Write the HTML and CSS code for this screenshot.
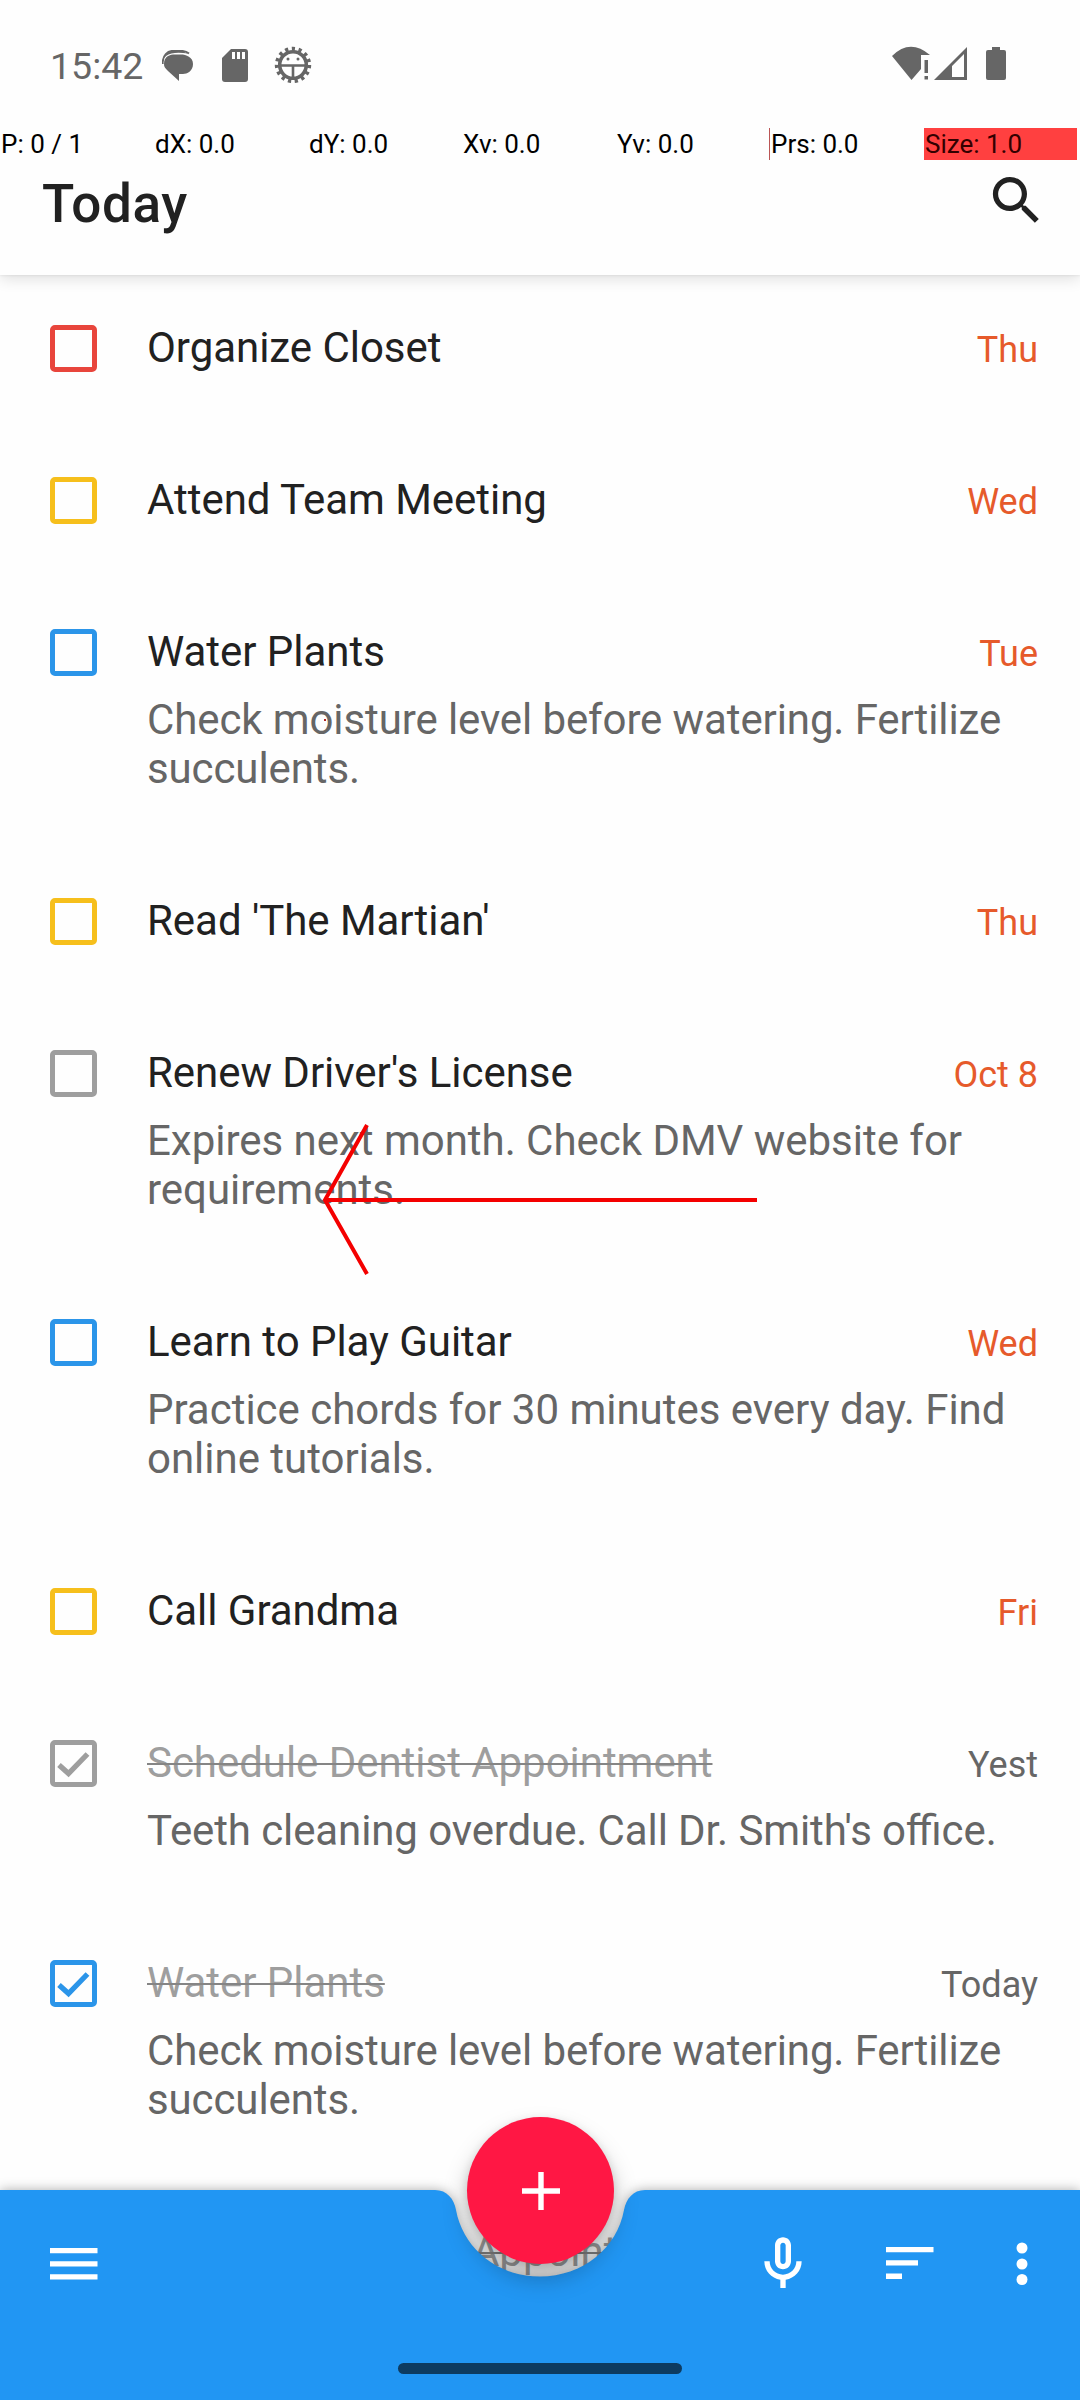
FILE: index.html
```html
<!DOCTYPE html>
<html lang="en">
<head>
<meta charset="utf-8">
<title>Tasks</title>
<link rel="stylesheet" href="styles.css">
</head>
<body>
<div class="screen">
  <header class="header">
    <div class="status">
      <span class="clock">15:42</span>
      <svg class="icon-chat" width="32" height="32" viewBox="0 0 32 32"><path d="M2 14C2 6 8 4.500 13 4.500H19C24 4.500 31 7 31 14S25 24 21 24H17V31L6 21C3 18 2 17 2 14Z" fill="#666"/><path d="M.8 14C0 5 6 .8 11 .8H19C22 .8 25 1.800 27 3.500" fill="none" stroke="#666" stroke-width="1.800"/><path d="M1 9C4 3 8 1 12 1H20L26 3.500C18 2.500 9 2 4 6Z" fill="#666"/></svg>
      <svg class="icon-card" width="26" height="33" viewBox="0 0 26 33"><path d="M9 0H23Q26 0 26 3V30Q26 33 23 33H3Q0 33 0 30V9Z" fill="#666"/><path d="M10 3h3v7h-3zM15 3h3v7h-3zM20 3h3v7h-3z" fill="#fff"/></svg>
      <svg class="icon-bug" width="38" height="38" viewBox="-19 -19 38 38"><circle r="16.200" fill="none" stroke="#666" stroke-width="4" stroke-dasharray="3.200 3.586"/><circle r="13.300" fill="none" stroke="#666" stroke-width="3.600"/><path d="M-13 0.500H13M0 0V13" stroke="#666" stroke-width="2.600"/><circle cx="-5" cy="-6" r="1.500" fill="#666"/><circle cx="5" cy="-6" r="1.500" fill="#666"/></svg>
      <span class="grow"></span>
      <svg class="icon-net" width="116" height="36" viewBox="0 0 116 36"><path d="M0 10Q18 -8 38 9H29V23L19.500 34Z" fill="#666"/><path d="M32.500 14h3.500v13h-3.500zM32.500 30h3.500v3.500h-3.500z" fill="#666"/><path d="M42 34 75 1V34ZM60 20V31H72V8Z" fill="#666" fill-rule="evenodd"/><path d="M94 6Q94 4 96 4H100V1H108V4H112Q114 4 114 6V32Q114 34 112 34H96Q94 34 94 32Z" fill="#666"/></svg>
    </div>
    <div class="pointer">
      <span>P: 0 / 1</span><span>dX: 0.0</span><span>dY: 0.0</span><span>Xv: 0.0</span><span>Yv: 0.0</span><span class="prs">Prs: 0.0</span><span class="size">Size: 1.0</span>
    </div>
    <div class="title-row">
      <h1>Today</h1>
      <svg width="63" height="63" viewBox="0 0 24 24"><path fill="#212121" d="M15.500 14h-.79l-.28-.27C15.410 12.590 16 11.110 16 9.500 16 5.910 13.090 3 9.500 3S3 5.910 3 9.500 5.910 16 9.500 16c1.610 0 3.090-.59 4.230-1.570l.27.28v.79l5 4.990L20.490 19l-4.990-5zm-6 0C7.010 14 5 11.990 5 9.500S7.010 5 9.500 5 14 7.010 14 9.500 11.990 14 9.500 14z"/></svg>
    </div>
  </header>
  <main class="list">
    <article class="task"><i class="box red"></i><div class="body"><h2>Organize Closet</h2></div><time>Thu</time></article>
    <article class="task"><i class="box yellow"></i><div class="body"><h2>Attend Team Meeting</h2></div><time>Wed</time></article>
    <article class="task"><i class="box blue"></i><div class="body"><h2>Water Plants</h2><p class="tight">Check moisture level before watering. Fertilize<br>succulents.</p></div><time>Tue</time></article>
    <article class="task"><i class="box yellow"></i><div class="body"><h2>Read 'The Martian'</h2></div><time>Thu</time></article>
    <article class="task"><i class="box grey"></i><div class="body"><h2>Renew Driver's License</h2><p>Expires next month. Check DMV website for<br>requirements.</p></div><time>Oct 8</time></article>
    <article class="task"><i class="box blue"></i><div class="body"><h2>Learn to Play Guitar</h2><p>Practice chords for 30 minutes every day. Find<br>online tutorials.</p></div><time>Wed</time></article>
    <article class="task"><i class="box yellow"></i><div class="body"><h2>Call Grandma</h2></div><time>Fri</time></article>
    <article class="task done"><i class="box grey"><svg width="47" height="47" viewBox="0 0 47 47"><path d="M9 25 18.500 33.500 37.500 14" /></svg></i><div class="body"><h2>Schedule Dentist Appointment</h2><p class="tight">Teeth cleaning overdue. Call Dr. Smith's office.</p></div><time>Yest</time></article>
    <article class="task done"><i class="box blue"><svg width="47" height="47" viewBox="0 0 47 47"><path d="M9 25 18.500 33.500 37.500 14" /></svg></i><div class="body"><h2>Water Plants</h2><p class="tight">Check moisture level before watering. Fertilize<br>succulents.</p></div><time>Today</time></article>
    <article class="task done partial"><div class="body"><h2>Appointment</h2></div></article>
  </main>
  <footer class="bar">
    <svg class="bar-shape" width="1080" height="230" viewBox="0 -20 1080 230"><path d="M0 0H435C447 0 454 9 456 20C463 58 497 86.500 540 86.500S617 58 624 20C626 9 633 0 645 0H1080V210H0Z" fill="#2196f3"/></svg>
    <div class="actions">
      <svg width="48" height="34" viewBox="0 0 48 34"><path d="M0 1h47.500v5.300H0zM0 14.200h47.500v5.300H0zM0 27.300h47.500v5.300H0z" fill="#fff"/></svg>
      <span class="grow"></span>
      <svg width="64" height="64" viewBox="0 0 24 24"><path fill="#fff" d="M12 14c1.660 0 3-1.340 3-3V5c0-1.660-1.340-3-3-3S9 3.340 9 5v6c0 1.660 1.340 3 3 3zm-1-9c0-.55.450-1 1-1s1 .450 1 1v6c0 .55-.450 1-1 1s-1-.450-1-1V5zm6 6c0 2.760-2.240 5-5 5s-5-2.240-5-5H5c0 3.530 2.610 6.430 6 6.920V21h2v-3.080c3.390-.490 6-3.390 6-6.920h-2z"/></svg>
      <svg class="icon-sort" width="48" height="34" viewBox="0 0 48 34"><path d="M0 0h47.500v5.300H0zM0 13.300h32v5.300H0zM0 26.600h16v5.300H0z" fill="#fff"/></svg>
      <svg class="icon-more" width="12" height="44" viewBox="0 0 12 44"><circle cx="6" cy="6" r="5.500"/><circle cx="6" cy="22" r="5.500"/><circle cx="6" cy="37.500" r="5.500"/></svg>
    </div>
    <div class="home"></div>
    <div class="fab"><svg width="38" height="38" viewBox="0 0 38 38"><path d="M0 19H38M19 0V38" stroke="#fff" stroke-width="5.400"/></svg></div>
  </footer>
  <svg class="gesture" width="440" height="156" viewBox="0 0 440 156"><path d="M47 1 5 76 47 150M5 76H437" fill="none" stroke="#f40000" stroke-width="4"/></svg>
  <i class="touch"></i>
</div>
</body>
</html>
```
FILE: styles.css
```css
* { box-sizing: border-box; margin: 0; padding: 0; }
body { background: #fefefe; font-family: Roboto, sans-serif; color: #212121; }
.screen { position: relative; width: 1080px; height: 2400px; overflow: hidden; display: flex; flex-direction: column; }
.grow { flex: 1; }
svg { display: block; flex: none; }
.header { height: 275px; flex: none; background: #fefefe; box-shadow: 0 4px 14px rgba(0,0,0,.12), 0 0 3px rgba(0,0,0,.1); display: flex; flex-direction: column; }
.status { height: 128px; display: flex; align-items: flex-start; padding-left: 50px; }
.clock { width: 112px; font-size: 37.5px; line-height: 44px; margin-top: 44px; color: #666; }
.icon-chat { margin-top: 50px; }
.icon-card { margin: 49px 0 0 28px; }
.icon-bug { margin: 46px 0 0 26px; }
.icon-net { margin: 46px 72px 0 0; }
.pointer { height: 32px; display: grid; grid-template-columns: repeat(7, 154px); font-size: 26px; line-height: 32px; color: #000; }
.pointer span { padding-left: 1px; }
.pointer .prs { border-left: 1px solid #b55; margin-left: -1px; }
.pointer .size { background: #ff4040; color: #300; width: 153px; }
.title-row { flex: 1; display: flex; justify-content: space-between; padding: 9px 32px 0 42px; }
h1 { font-size: 53px; line-height: 62px; font-weight: 500; letter-spacing: .6px; margin-top: 4px; }
.list { flex: none; height: 1915px; padding-top: 48px; }
.task { display: flex; align-items: flex-start; padding: 0 42px 0 50px; }
.box { width: 47px; height: 47px; margin: 2px 50px 0 0; border: 5px solid; border-radius: 5px; flex: none; }
.box svg { margin: -5px; fill: none; stroke: currentColor; stroke-width: 5.300; }
.red { color: #e8453c; }
.yellow { color: #f6bf1c; }
.blue { color: #2b95e9; }
.grey { color: #9e9e9e; }
.body { flex: 1; min-width: 0; padding-bottom: 103px; }
h2, p { font-size: 42px; line-height: 49px; font-weight: 400; white-space: nowrap; }
h2 { letter-spacing: -.04px; }
p { color: #666; margin-top: 19px; letter-spacing: -.02px; }
.tight { letter-spacing: -.11px; font-feature-settings: "liga" 1; }
time { font-size: 36px; line-height: 44px; color: #e65a2b; margin-top: 5px; white-space: nowrap; }
.done h2 { color: #9e9e9e; text-decoration: line-through; text-decoration-color: #858585; text-decoration-thickness: 2px; }
.done time { color: #666; }
.partial { padding-left: 472px; }
.bar { position: relative; height: 210px; flex: none; display: flex; flex-direction: column; justify-content: space-between; }
.bar-shape { position: absolute; left: 0; top: -20px; filter: drop-shadow(0 0 6px rgba(0,0,0,.32)); }
.actions { position: relative; display: flex; align-items: center; height: 147px; padding: 0 52px 0 50px; }
.icon-sort { margin: 0 82px 0 71px; }
.icon-more { fill: #fff; }
.home { position: relative; width: 284px; height: 11px; border-radius: 6px; background: #0d3b60; margin: 0 auto 26px; }
.fab { position: absolute; left: 467px; top: -73px; width: 147px; height: 147px; border-radius: 50%; background: #ff1744; display: grid; place-items: center; box-shadow: 0 14px 24px rgba(0,0,0,.26), 0 3px 10px rgba(0,0,0,.12); }
.gesture { position: absolute; left: 320px; top: 1124px; }
.touch { position: absolute; left: 324px; top: 719px; width: 2px; height: 2px; background: #b02020; }
```
